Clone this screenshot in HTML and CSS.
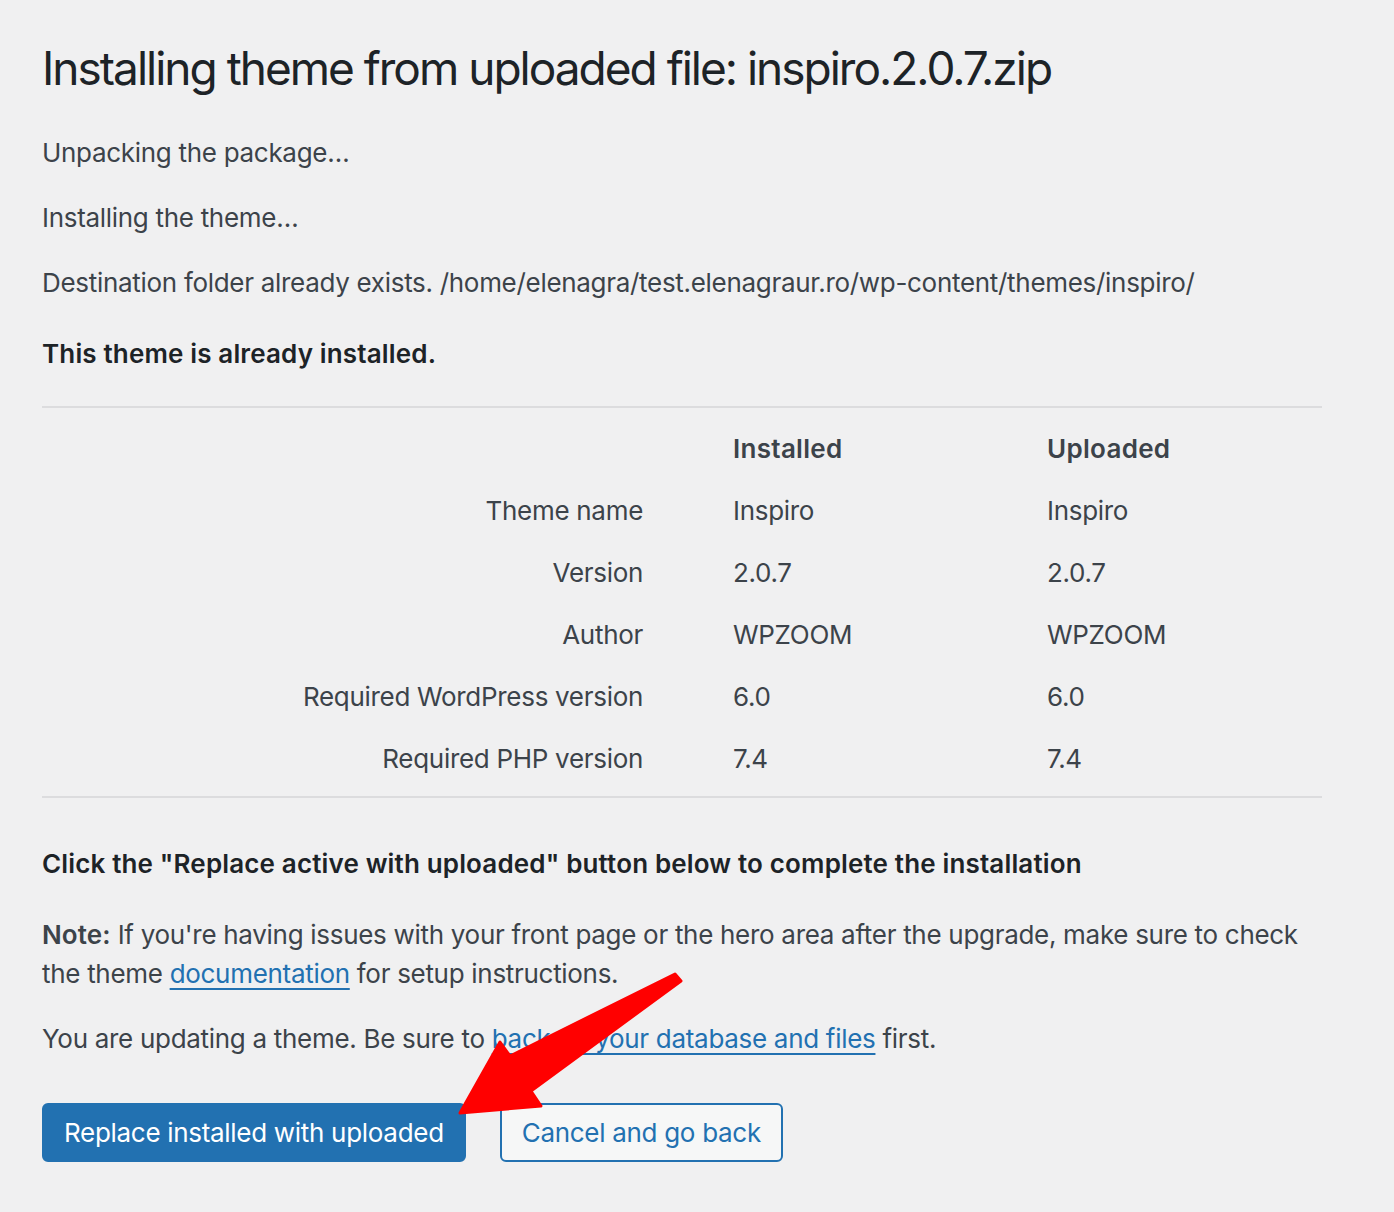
FILE: index.html
```html
<!DOCTYPE html>
<html lang="en">
<head>
<meta charset="utf-8">
<title>Installing theme from uploaded file</title>
<link rel="stylesheet" href="styles.css">
</head>
<body>
<div class="page">
  <div class="wrap">
    <h1 class="title">Installing theme from uploaded file: inspiro.2.0.7.zip</h1>
    <p class="msg">Unpacking the package…</p>
    <p class="msg">Installing the theme…</p>
    <p class="msg">Destination folder already exists. /home/elenagra/test.elenagraur.ro/wp-content/themes/inspiro/</p>
    <h2 class="heading heading-first">This theme is already installed.</h2>
    <div class="compare">
      <div class="compare-row compare-head">
        <div class="cell label"></div>
        <div class="cell">Installed</div>
        <div class="cell">Uploaded</div>
      </div>
      <div class="compare-row">
        <div class="cell label">Theme name</div>
        <div class="cell">Inspiro</div>
        <div class="cell">Inspiro</div>
      </div>
      <div class="compare-row">
        <div class="cell label">Version</div>
        <div class="cell">2.0.7</div>
        <div class="cell">2.0.7</div>
      </div>
      <div class="compare-row">
        <div class="cell label">Author</div>
        <div class="cell">WPZOOM</div>
        <div class="cell">WPZOOM</div>
      </div>
      <div class="compare-row">
        <div class="cell label">Required WordPress version</div>
        <div class="cell">6.0</div>
        <div class="cell">6.0</div>
      </div>
      <div class="compare-row">
        <div class="cell label">Required PHP version</div>
        <div class="cell">7.4</div>
        <div class="cell">7.4</div>
      </div>
    </div>
    <h2 class="heading heading-second">Click the "Replace active with uploaded" button below to complete the installation</h2>
    <p class="msg note"><strong>Note:</strong> If you're having issues with your front page or the hero area after the upgrade, make sure to check the theme <a class="link" href="#">documentation</a> for setup instructions.</p>
    <p class="msg">You are updating a theme. Be sure to <a class="link" href="#">back up your database and files</a> first.</p>
    <div class="actions">
      <a class="button button-primary" href="#">Replace installed with uploaded</a>
      <a class="button button-secondary" href="#">Cancel and go back</a>
    </div>
  </div>
  <svg class="arrow" width="1394" height="1212" viewBox="0 0 1394 1212" aria-hidden="true">
    <polygon points="675,974 681,981 531,1091 541,1106 460,1113 500,1042 510,1056" fill="#ff0000" stroke="#ff0000" stroke-width="3" stroke-linejoin="round"/>
  </svg>
</div>
</body>
</html>
```

FILE: styles.css
```css
html, body {
  margin: 0;
  padding: 0;
  background: #f0f0f1;
}

body {
  font-family: Inter, "Noto Sans", "Liberation Sans", sans-serif;
  font-size: 26px;
  line-height: 39px;
  letter-spacing: -0.3px;
  color: #3c434a;
}

.page {
  position: relative;
  width: 1394px;
  min-height: 1212px;
}

.wrap {
  padding: 0 72px 0 42px;
  overflow: hidden;
}

.title {
  margin: 38px 0 35px;
  font-size: 46px;
  line-height: 60px;
  font-weight: 400;
  letter-spacing: -2px;
  color: #1d2327;
}

.msg {
  margin: 0 0 26px;
}

.msg strong {
  font-weight: 600;
  letter-spacing: 0.1px;
}

.heading {
  font-size: 26px;
  line-height: 39px;
  font-weight: 600;
  letter-spacing: 0.15px;
  color: #1d2327;
}

.heading-first {
  margin: 32px 0 33px;
}

.heading-second {
  margin: 46px 0 32px;
}

.compare {
  border-top: 2px solid #dcdcde;
  border-bottom: 2px solid #dcdcde;
  padding: 10px 0 7px;
}

.compare-row {
  display: grid;
  grid-template-columns: 601px 224px 1fr;
  column-gap: 90px;
  align-items: center;
  height: 62px;
}

.compare-head {
  height: 61px;
  font-weight: 600;
  letter-spacing: 0.3px;
  color: #3c434a;
}

.cell.label {
  text-align: right;
}

.link {
  color: #2271b1;
  text-decoration: underline;
  text-decoration-thickness: 2px;
  text-underline-offset: 5px;
}

.actions {
  display: flex;
  gap: 34px;
  margin-top: 45px;
}

.button {
  display: inline-block;
  box-sizing: border-box;
  height: 59px;
  line-height: 55px;
  padding: 0 20px;
  border: 2px solid #2271b1;
  border-radius: 6px;
  font-size: 26px;
  text-decoration: none;
  white-space: nowrap;
}

.button-primary {
  background: #2271b1;
  color: #ffffff;
}

.button-secondary {
  background: #f6f7f7;
  color: #2271b1;
}

.arrow {
  position: absolute;
  left: 0;
  top: 0;
  pointer-events: none;
}
```
